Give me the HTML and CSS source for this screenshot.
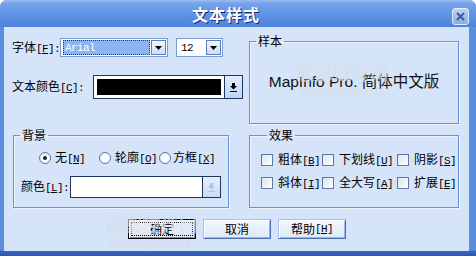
FILE: index.html
```html
<!DOCTYPE html>
<html lang="zh-CN">
<head>
<meta charset="utf-8">
<title>文本样式</title>
<link rel="stylesheet" href="styles.css">
</head>
<body>
<div class="window">
  <div class="titlebar">
    <div class="title">文本样式</div>
    <div class="close">
      <svg width="9" height="9" viewBox="0 0 9 9"><path d="M1 1L8 8M8 1L1 8" stroke="#3b5c9e" stroke-width="2" fill="none"/></svg>
    </div>
  </div>
  <div class="client">
    <div class="top">
      <div class="leftcol">
        <div class="row1">
          <span class="lbl lbl1">字体<span class="k">[<u>F</u>]:</span></span>
          <div class="combo font">
            <div class="field"><span class="sel">Arial</span></div>
            <div class="ddbtn"><svg width="7" height="4" viewBox="0 0 7 4"><path d="M0 0H7L3.5 4Z" fill="#000"/></svg></div>
          </div>
          <div class="combo size">
            <div class="field"><span class="val">12</span></div>
            <div class="ddbtn"><svg width="7" height="4" viewBox="0 0 7 4"><path d="M0 0H7L3.5 4Z" fill="#000"/></svg></div>
          </div>
        </div>
        <div class="row2">
          <span class="lbl lbl2">文本颜色<span class="k">[<u>C</u>]:</span></span>
          <div class="colorcombo big">
            <div class="swatch black"></div>
            <div class="cbtn"><svg width="7" height="9" viewBox="0 0 7 9"><path d="M2 0H5V3H7L3.5 6.5L0 3H2Z M0 8H7V9H0Z" fill="#000"/></svg></div>
          </div>
        </div>
      </div>
      <fieldset class="group sample">
        <legend>样本</legend>
        <div class="sample-text">MapInfo Pro. 简体中文版</div>
      </fieldset>
    </div>
    <div class="mid">
      <fieldset class="group bg">
        <legend>背景</legend>
        <div class="radios">
          <div class="opt o1"><span class="rb on"></span><span>无<span class="k">[<u>N</u>]</span></span></div>
          <div class="opt o2"><span class="rb"></span><span>轮廓<span class="k">[<u>O</u>]</span></span></div>
          <div class="opt o3"><span class="rb"></span><span>方框<span class="k">[<u>X</u>]</span></span></div>
        </div>
        <div class="colorrow">
          <span class="lbl lbl3">颜色<span class="k">[<u>L</u>]:</span></span>
          <div class="colorcombo small">
            <div class="swatch"></div>
            <div class="cbtn off"><svg width="7" height="9" viewBox="0 0 7 9"><path d="M2 0H5V3H7L3.5 6.5L0 3H2Z M0 8H7V9H0Z" fill="#a9c3ea"/></svg></div>
          </div>
        </div>
      </fieldset>
      <fieldset class="group fx">
        <legend>效果</legend>
        <div class="cbrow r1">
          <div class="opt c1"><span class="cb"></span><span>粗体<span class="k">[<u>B</u>]</span></span></div>
          <div class="opt c2"><span class="cb"></span><span>下划线<span class="k">[<u>U</u>]</span></span></div>
          <div class="opt c3"><span class="cb"></span><span>阴影<span class="k">[<u>S</u>]</span></span></div>
        </div>
        <div class="cbrow r2">
          <div class="opt c1"><span class="cb"></span><span>斜体<span class="k">[<u>I</u>]</span></span></div>
          <div class="opt c2"><span class="cb"></span><span>全大写<span class="k">[<u>A</u>]</span></span></div>
          <div class="opt c3"><span class="cb"></span><span>扩展<span class="k">[<u>E</u>]</span></span></div>
        </div>
      </fieldset>
    </div>
    <div class="buttons">
      <div class="btn default"><span class="focus">确定</span></div>
      <div class="btn">取消</div>
      <div class="btn">帮助<span class="k">[<u>H</u>]</span></div>
    </div>
    <div class="wm wm1">慧都控件网<span class="url">www.evget.com</span></div>
    <div class="wm wm2">慧都控件网<span class="url">www.evget.com</span></div>
  </div>
</div>
</body>
</html>
```

FILE: styles.css
```css
body {
  margin: 0;
  background: #ffffff;
}

.window {
  width: 476px;
  height: 256px;
  display: flex;
  flex-direction: column;
  border-radius: 7px 7px 0 0;
  overflow: hidden;
  background: linear-gradient(to bottom, #5a8fe0 0, #5a8fe0 250px, #3867c2 251px, #2a55aa 256px);
  font-family: "Noto Sans CJK SC", sans-serif;
  font-size: 12px;
  color: #000;
}

.titlebar {
  height: 27px;
  flex: none;
  display: flex;
  align-items: flex-start;
  background: linear-gradient(to bottom, #9dbdf0 0, #77a4ea 3px, #6396e4 12px, #5689df 22px, #4f82da 27px);
}

.title {
  flex: 1;
  text-align: center;
  padding-top: 6px;
  font-size: 16px;
  line-height: 17px;
  font-weight: bold;
  letter-spacing: 1px;
  color: #ffffff;
  text-shadow: 1px 1px 0 #102c78;
}

.close {
  width: 17px;
  height: 17px;
  margin: 8px 7px 0 0;
  box-sizing: border-box;
  border: 1px solid #e2ecfb;
  border-radius: 3px;
  background: linear-gradient(to bottom, #bcd2f4, #86ade8);
  display: flex;
  align-items: center;
  justify-content: center;
}

.client {
  flex: 1;
  margin: 0 7px 5px 4px;
  padding: 7px 0 0 8px;
  background: #d5e4f8;
  position: relative;
}

.k {
  font-family: "Liberation Mono", monospace;
  font-size: 11px;
  letter-spacing: -0.6px;
}

.k u {
  text-underline-offset: 1px;
}

.lbl {
  line-height: 14px;
  white-space: nowrap;
  flex: none;
}

.lbl1 { width: 48px; }
.lbl2 { width: 81px; }
.lbl3 { width: 49px; }

.top {
  display: flex;
  gap: 6px;
  height: 90px;
}

.leftcol {
  width: 231px;
  flex: none;
}

.row1 {
  display: flex;
  align-items: center;
  height: 19px;
  margin-top: 4px;
}

.row2 {
  display: flex;
  align-items: center;
  height: 24px;
  margin-top: 18px;
}

.combo {
  height: 19px;
  box-sizing: border-box;
  border: 1px solid #7b9ccf;
  background: #ffffff;
  padding: 1px;
  display: flex;
  flex: none;
}

.combo.font { width: 108px; }
.combo.size { width: 47px; margin-left: 8px; }

.field {
  flex: 1;
  padding: 0 1px;
  display: flex;
}

.sel {
  flex: 1;
  background: #8cb4ee;
  outline: 1px dotted #203866;
  outline-offset: -1px;
  color: #ffffff;
  font-family: "Liberation Mono", monospace;
  font-size: 11px;
  letter-spacing: -0.6px;
  padding-left: 2px;
  display: flex;
  align-items: center;
}

.val {
  font-family: "Liberation Mono", monospace;
  font-size: 11px;
  letter-spacing: -0.6px;
  padding-left: 2px;
  display: flex;
  align-items: center;
}

.ddbtn {
  width: 15px;
  flex: none;
  box-sizing: border-box;
  border: 1px solid #5e7fb6;
  background: linear-gradient(to bottom, #f2f7fe, #cadcf6);
  display: flex;
  align-items: center;
  justify-content: center;
}

.colorcombo {
  box-sizing: border-box;
  border: 1px solid #1f3563;
  background: #ffffff;
  display: flex;
  flex: none;
}

.colorcombo.big { width: 150px; height: 24px; }
.colorcombo.small { width: 151px; height: 22px; }

.swatch {
  flex: 1;
  margin: 3px;
}

.swatch.black { background: #000000; }

.cbtn {
  width: 18px;
  flex: none;
  box-sizing: border-box;
  border-left: 1px solid #1f3563;
  background: linear-gradient(to bottom, #e3edfb, #bfd4f4);
  display: flex;
  align-items: center;
  justify-content: center;
}

.cbtn.off {
  background: linear-gradient(to bottom, #e6eefb, #cddcf5);
}

.group {
  margin: 0;
  padding: 0;
  min-width: 0;
  box-sizing: border-box;
  border: 1px solid #6592d8;
  box-shadow: 1px 1px 0 #eef4fd, inset 1px 1px 0 #eef4fd;
}

.group legend {
  margin-left: 6px;
  padding: 0 2px;
  line-height: 14px;
  font-size: 12px;
}

.sample {
  width: 210px;
  height: 90px;
  flex: none;
  padding-bottom: 7px;
  display: flex;
  align-items: center;
  justify-content: center;
}

.sample-text {
  font-family: "Liberation Sans", "Noto Sans CJK SC", sans-serif;
  font-size: 15.5px;
  line-height: 18px;
  color: #111;
  white-space: nowrap;
}

.mid {
  display: flex;
  gap: 20px;
  margin-top: 4px;
  padding-left: 1px;
}

.bg {
  width: 216px;
  height: 80px;
  flex: none;
}

.fx {
  width: 210px;
  height: 80px;
  flex: none;
  padding-left: 11px;
}

.radios {
  display: flex;
  align-items: center;
  height: 14px;
  margin-top: 9px;
  padding-left: 25px;
}

.opt {
  display: flex;
  align-items: center;
  gap: 4px;
  line-height: 14px;
  white-space: nowrap;
  flex: none;
}

.o1, .o2 { width: 60px; }
.o3 { gap: 2px; }

.rb {
  width: 12px;
  height: 12px;
  box-sizing: border-box;
  border-radius: 50%;
  border: 1px solid #5b78a6;
  background: radial-gradient(circle at 60% 60%, #ffffff 30%, #dde5f0 100%);
  display: flex;
  align-items: center;
  justify-content: center;
  flex: none;
}

.rb.on::after {
  content: "";
  width: 4px;
  height: 4px;
  border-radius: 50%;
  background: #1a1a1a;
}

.colorrow {
  display: flex;
  align-items: center;
  margin-top: 11px;
  padding-left: 7px;
}

.cbrow {
  display: flex;
  align-items: center;
  height: 12px;
}

.cbrow.r1 { margin-top: 12px; }
.cbrow.r2 { margin-top: 11px; }

.cbrow .opt { gap: 5px; }
.c1 { width: 61px; }
.c2 { width: 75px; }

.cb {
  width: 12px;
  height: 12px;
  box-sizing: border-box;
  border: 1px solid #5b78a6;
  background: linear-gradient(135deg, #dce4ef, #ffffff);
  flex: none;
}

.buttons {
  display: flex;
  gap: 7px;
  margin-top: 11px;
  padding-left: 116px;
}

.btn {
  width: 68px;
  height: 20px;
  box-sizing: border-box;
  border: 1px solid;
  border-color: #a3c2f2 #4d6fae #4d6fae #a3c2f2;
  box-shadow: inset 1px 1px 0 #ffffff, inset -1px -1px 0 #9ab6e2;
  background: linear-gradient(to bottom, #f3f7fe, #dde8f8);
  display: flex;
  align-items: center;
  justify-content: center;
  line-height: 14px;
  white-space: nowrap;
}

.btn.default {
  border: 1px solid #000000;
  box-shadow: inset 1px 1px 0 #ffffff, inset -1px -1px 0 #6f8fc4;
  padding: 3px;
}

.focus {
  flex: 1;
  align-self: stretch;
  display: flex;
  align-items: center;
  justify-content: center;
  outline: 1px dotted #000;
}

.wm {
  position: absolute;
  display: flex;
  flex-direction: column;
  align-items: center;
  font-size: 18.5px;
  line-height: 18px;
  font-weight: bold;
  color: rgba(255, 255, 255, 0.5);
  text-shadow: 0 0 1px rgba(110, 130, 165, 0.3);
  pointer-events: none;
  white-space: nowrap;
}

.wm .url {
  font-family: "Liberation Sans", sans-serif;
  font-size: 11px;
  line-height: 12px;
  margin-top: 4px;
}

.wm1 { left: 292px; top: 36px; }
.wm2 { left: 101px; top: 188px; }
```
